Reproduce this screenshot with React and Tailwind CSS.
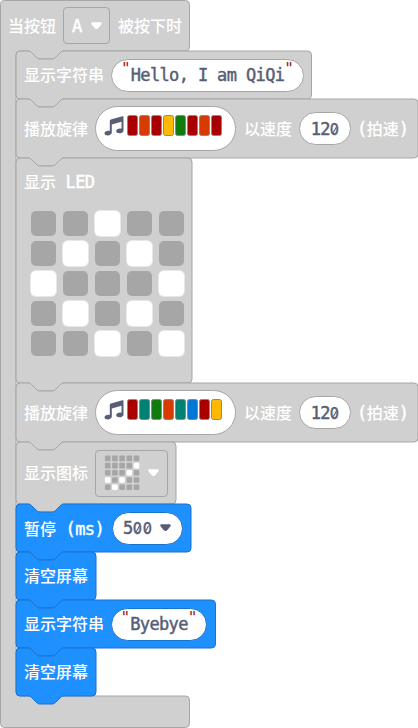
import React from "react";

const GRAY = { fill: "#d0d0d0", stroke: "#a6a6a6" };
const BLUE = { fill: "#1e90ff", stroke: "#1873cc" };

const NOTCH = "H 12 c 2,0 3,1 4,2 l 4,4 c 1,1 2,2 4,2 h 12 c 2,0 3,-1 4,-2 l 4,-4 c 1,-1 2,-2 4,-2";
const TAB = "H 48 c -2,0 -3,1 -4,2 l -4,4 c -1,1 -2,2 -4,2 h -12 c -2,0 -3,-1 -4,-2 l -4,-4 c -1,-1 -2,-2 -4,-2";

function blockPath(w, h) {
  return `M 0,4 A 4,4 0 0,1 4,0 ${NOTCH} H ${w - 4} a 4,4 0 0,1 4,4 V ${h - 4} a 4,4 0 0,1 -4,4 ${TAB} H 4 a 4,4 0 0,1 -4,-4 z`;
}

function Block({ w, h, tone = GRAY, className = "", children }) {
  return (
    <div className="relative" style={{ width: w, height: h }}>
      <svg className="absolute inset-0 overflow-visible" width={w} height={h}>
        <path d={blockPath(w, h)} fill={tone.fill} stroke={tone.stroke} />
      </svg>
      <div className={"relative flex h-full items-center pl-2 " + className}>{children}</div>
    </div>
  );
}

function Label({ children, className = "" }) {
  return <span className={"whitespace-pre pt-[2px] text-white " + className}>{children}</span>;
}

function Mono({ children, className = "" }) {
  return (
    <span className={"whitespace-pre text-[17px] leading-none tracking-[-0.63px] [-webkit-text-stroke:0.45px_currentColor] " + className}>
      {children}
    </span>
  );
}

function Num({ value }) {
  return (
    <span className="flex items-center pt-px text-[17px] leading-none [-webkit-text-stroke:0.5px_currentColor]">
      {value.split("").map((d, i) => (
        <span key={i} className="relative inline-block w-[9.6px] text-center">
          {d === "0" ? (
            <>
              <span className="-mx-1 inline-block font-['Inter',sans-serif] text-[16.5px] [transform:scaleX(0.82)]">0</span>
              <svg className="absolute inset-0" width="10" height="17" viewBox="0 0 10 17">
                <path d="M3.2 11.700 6.600 5.800" stroke="currentColor" strokeWidth="1.100" />
              </svg>
            </>
          ) : (
            d
          )}
        </span>
      ))}
    </span>
  );
}

function Arrow({ color = "#fff", className = "" }) {
  return (
    <svg width="11" height="8" viewBox="0 0 11 8" className={"shrink-0 " + className}>
      <path d="M1.700.3h7.600c1.400 0 1.900 1.300 1 2.200L7.200 6.200c-1 1.100-2.400 1.100-3.400 0L.7 2.500C-.2 1.600.3.3 1.700.3z" fill={color} />
    </svg>
  );
}

function Pill({ className, tone = GRAY, children }) {
  return (
    <div
      className={"box-border flex h-[33px] shrink-0 items-center rounded-full border bg-white text-[#575e75] " + className}
      style={{ borderColor: tone.stroke }}
    >
      {children}
    </div>
  );
}

function Quote() {
  return <span className="-mt-3 w-[9.6px] shrink-0 text-center font-normal text-[#a31515]">"</span>;
}

function StringPill({ text, className, tone }) {
  return (
    <Pill className={"justify-center " + className} tone={tone}>
      <Quote />
      <Mono className="pt-px">{text}</Mono>
      <Quote />
    </Pill>
  );
}

function Melody({ notes }) {
  return (
    <Block w={402} h={59}>
      <Label>播放旋律</Label>
      <div className="ml-[7px] flex h-[45px] w-[141px] shrink-0 items-start rounded-full border border-[#a6a6a6] bg-white pl-2 pt-[8px]">
        <svg width="20" height="20" viewBox="0 0 20 20" className="mr-[3px] mt-px shrink-0">
          <path
            d="M5.800 4.600C5.800 4 6.200 3.600 6.800 3.400L18.300.2c.7-.2 1.200.1 1.200.8V14.400c0 1.700-1.900 2.900-4.100 2.900-1.900 0-3.200-.8-3.200-2.200 0-1.500 1.800-2.600 3.800-2.600.6 0 1.100.1 1.500.2V5.700L7.800 8.400V16.600c0 1.700-1.900 2.900-4.100 2.900C1.800 19.500.5 18.700.5 17.300c0-1.500 1.800-2.600 3.800-2.600.6 0 1.100.1 1.500.2z"
            fill="#575e75"
          />
        </svg>
        <div className="flex gap-px">
          {notes.map((c, i) => (
            <span key={i} className="h-[21px] w-[11px] rounded-[2.5px] border border-[#898989]" style={{ backgroundColor: c }} />
          ))}
        </div>
      </div>
      <Label className="ml-[8px]">以速度</Label>
      <Pill className="ml-[7px] w-[52px] justify-center">
        <Num value="120" />
      </Pill>
      <Label className="ml-[6px]">
        <Mono>(</Mono>拍速<Mono>)</Mono>
      </Label>
    </Block>
  );
}

const LEDS = ["..#..", ".#.#.", "#...#", ".#.#.", "..#.#"];
const ICON = [".....", "....#", "...#.", "#.#..", ".#..."];

export default function App() {
  return (
    <div className="h-[728px] w-[418px] overflow-hidden bg-white font-['DejaVu_Sans_Mono','Noto_Sans_CJK_SC',monospace] text-[16px] font-medium leading-none">
      <div className="relative h-full w-full">
        <svg className="absolute inset-0" width="418" height="728">
          <path
            d="M.5 4.500a4 4 0 0 1 4-4H185.500a4 4 0 0 1 4 4V47a4 4 0 0 1-4 4H64c-2 0-3 1-4 2l-4 4c-1 1-2 2-4 2h-12c-2 0-3-1-4-2l-4-4c-1-1-2-2-4-2H20a4 4 0 0 0-4 4V692a4 4 0 0 0 4 4H185.500a4 4 0 0 1 4 4V723.500a4 4 0 0 1-4 4H4.500a4 4 0 0 1-4-4z"
            fill={GRAY.fill}
            stroke={GRAY.stroke}
          />
        </svg>
        <div className="relative flex h-[51px] items-center pl-2">
          <Label>当按钮</Label>
          <div className="ml-[7px] mr-2 flex h-[37px] w-[47px] items-center rounded border border-[#a6a6a6] pl-2 text-white">
            <Mono className="pt-[2px] [-webkit-text-stroke:0.8px_currentColor]">A</Mono>
            <Arrow className="ml-[9px]" />
          </div>
          <Label>被按下时</Label>
        </div>
        <div className="relative flex flex-col items-start pl-4">
          <Block w={295.5} h={48}>
            <Label>显示字符串</Label>
            <StringPill text="Hello, I am QiQi" className="ml-[7px] w-[193px]" />
          </Block>
          <Melody notes={["#a80000", "#d83b01", "#a80000", "#ffb900", "#107c10", "#a80000", "#d83b01", "#a80000"]} />
          <Block w={176} h={225} className="flex-col !items-start">
            <Label className="pt-[16px]">
              显示<Mono> LED</Mono>
            </Label>
            <div className="ml-[7px] mt-[20px] grid grid-cols-[repeat(5,25px)] gap-x-[7px] gap-y-[5px]">
              {LEDS.join("").split("").map((c, i) => (
                <span
                  key={i}
                  className={"h-[25px] w-[25px] rounded-[5px] " + (c === "#" ? "bg-white shadow-[0_0_0_1px_rgba(255,255,255,0.5)]" : "bg-[#a6a6a6]")}
                />
              ))}
            </div>
          </Block>
          <Melody notes={["#a80000", "#008272", "#107c10", "#d83b01", "#008272", "#0078d7", "#a80000", "#ffb900"]} />
          <Block w={160} h={62}>
            <Label>显示图标</Label>
            <div className="ml-[7px] flex h-[47px] w-[73px] items-center rounded border border-[#a6a6a6] pl-2">
              <svg width="36" height="36" className="shrink-0">
                {ICON.join("").split("").map((c, i) => (
                  <rect key={i} x={0.9 + (i % 5) * 7.2} y={0.6 + Math.floor(i / 5) * 7.2} width="5.6" height="5.6" rx="1" fill={c === "#" ? "#fff" : "#a6a6a6"} />
                ))}
              </svg>
              <Arrow className="ml-2" />
            </div>
          </Block>
          <Block w={175} h={48} tone={BLUE}>
            <Label>
              暂停<Mono> (ms)</Mono>
            </Label>
            <Pill className="ml-2 w-[71px] pl-[10px]" tone={BLUE}>
              <Num value="500" />
              <Arrow color="#575e75" className="ml-2" />
            </Pill>
          </Block>
          <Block w={80} h={48} tone={BLUE}>
            <Label>清空屏幕</Label>
          </Block>
          <Block w={199.5} h={48} tone={BLUE}>
            <Label>显示字符串</Label>
            <StringPill text="Byebye" className="ml-[7px] w-[96px]" tone={BLUE} />
          </Block>
          <Block w={80} h={48} tone={BLUE}>
            <Label>清空屏幕</Label>
          </Block>
        </div>
      </div>
    </div>
  );
}
